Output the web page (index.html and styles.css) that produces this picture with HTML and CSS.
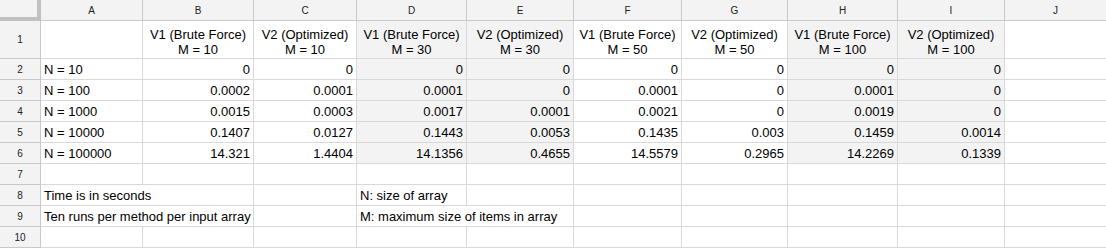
FILE: index.html
```html
<!DOCTYPE html>
<html>
<head>
<meta charset="utf-8">
<link rel="stylesheet" href="styles.css">
</head>
<body>
<div class="sheet">
  <div class="corner"></div>
  <div class="ch">A</div><div class="ch">B</div><div class="ch">C</div><div class="ch">D</div><div class="ch">E</div><div class="ch">F</div><div class="ch">G</div><div class="ch">H</div><div class="ch">I</div><div class="ch last">J</div>

  <div class="rh">1</div>
  <div class="c"></div>
  <div class="c hd">V1 (Brute Force)<br>M = 10</div>
  <div class="c hd">V2 (Optimized)<br>M = 10</div>
  <div class="c hd g">V1 (Brute Force)<br>M = 30</div>
  <div class="c hd g">V2 (Optimized)<br>M = 30</div>
  <div class="c hd">V1 (Brute Force)<br>M = 50</div>
  <div class="c hd">V2 (Optimized)<br>M = 50</div>
  <div class="c hd g">V1 (Brute Force)<br>M = 100</div>
  <div class="c hd g">V2 (Optimized)<br>M = 100</div>
  <div class="c last"></div>

  <div class="rh">2</div>
  <div class="c">N = 10</div>
  <div class="c n">0</div><div class="c n">0</div><div class="c n g">0</div><div class="c n g">0</div><div class="c n">0</div><div class="c n">0</div><div class="c n g">0</div><div class="c n g">0</div><div class="c last"></div>

  <div class="rh">3</div>
  <div class="c">N = 100</div>
  <div class="c n">0.0002</div><div class="c n">0.0001</div><div class="c n g">0.0001</div><div class="c n g">0</div><div class="c n">0.0001</div><div class="c n">0</div><div class="c n g">0.0001</div><div class="c n g">0</div><div class="c last"></div>

  <div class="rh">4</div>
  <div class="c">N = 1000</div>
  <div class="c n">0.0015</div><div class="c n">0.0003</div><div class="c n g">0.0017</div><div class="c n g">0.0001</div><div class="c n">0.0021</div><div class="c n">0</div><div class="c n g">0.0019</div><div class="c n g">0</div><div class="c last"></div>

  <div class="rh">5</div>
  <div class="c">N = 10000</div>
  <div class="c n">0.1407</div><div class="c n">0.0127</div><div class="c n g">0.1443</div><div class="c n g">0.0053</div><div class="c n">0.1435</div><div class="c n">0.003</div><div class="c n g">0.1459</div><div class="c n g">0.0014</div><div class="c last"></div>

  <div class="rh">6</div>
  <div class="c">N = 100000</div>
  <div class="c n">14.321</div><div class="c n">1.4404</div><div class="c n g">14.1356</div><div class="c n g">0.4655</div><div class="c n">14.5579</div><div class="c n">0.2965</div><div class="c n g">14.2269</div><div class="c n g">0.1339</div><div class="c last"></div>

  <div class="rh">7</div>
  <div class="c"></div><div class="c"></div><div class="c"></div><div class="c"></div><div class="c"></div><div class="c"></div><div class="c"></div><div class="c"></div><div class="c"></div><div class="c last"></div>

  <div class="rh">8</div>
  <div class="c span2">Time is in seconds</div>
  <div class="c"></div>
  <div class="c">N: size of array</div>
  <div class="c"></div><div class="c"></div><div class="c"></div><div class="c"></div><div class="c"></div><div class="c last"></div>

  <div class="rh">9</div>
  <div class="c span2">Ten runs per method per input array</div>
  <div class="c"></div>
  <div class="c span2">M: maximum size of items in array</div>
  <div class="c"></div><div class="c"></div><div class="c"></div><div class="c"></div><div class="c last"></div>

  <div class="rh">10</div>
  <div class="c"></div><div class="c"></div><div class="c"></div><div class="c"></div><div class="c"></div><div class="c"></div><div class="c"></div><div class="c"></div><div class="c"></div><div class="c last"></div>
</div>
</body>
</html>
```

FILE: styles.css
```css
html, body {
  margin: 0;
  padding: 0;
  background: #ffffff;
}

.sheet {
  display: grid;
  grid-template-columns: 41px 102px 111px 103px 110px 107px 108px 106px 110px 107px 1fr;
  grid-template-rows: 21px 38px repeat(9, 21px);
  font-family: "Liberation Sans", Arial, sans-serif;
  font-size: 13px;
  color: #000;
}

.sheet > div {
  box-sizing: border-box;
  border-right: 1px solid #d9d9d9;
  border-bottom: 1px solid #d9d9d9;
  min-width: 0;
}

.corner {
  background: #f3f3f3;
  border-right: 4px solid #c0c0c0 !important;
  border-bottom: 4px solid #c0c0c0 !important;
}

.ch,
.rh {
  background: #f3f3f3;
  border-right-color: #c9c9c9 !important;
  border-bottom-color: #c9c9c9 !important;
  display: flex;
  align-items: center;
  justify-content: center;
  font-size: 10px;
  color: #222;
}

.c {
  display: flex;
  align-items: flex-end;
  padding: 0 3px 2px 3px;
  line-height: 15px;
  white-space: nowrap;
}

.c.hd {
  justify-content: center;
  text-align: center;
  padding-bottom: 1px;
}

.c.n {
  justify-content: flex-end;
}

.c.g {
  background: #f3f3f3;
}

.c.span2 {
  grid-column: span 2;
}

.sheet > .last {
  border-right: none;
}
```
